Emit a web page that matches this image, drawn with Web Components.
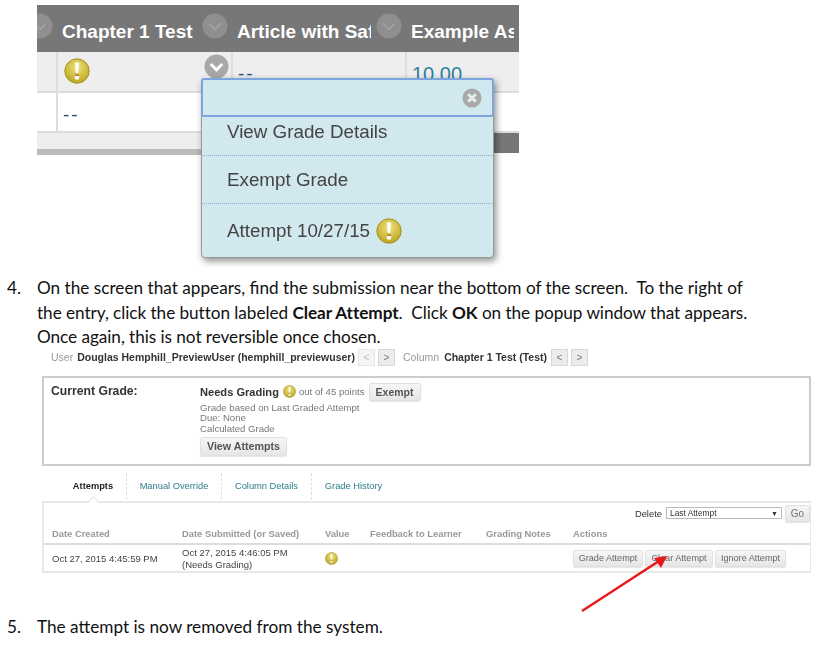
<!DOCTYPE html>
<html>
<head>
<meta charset="utf-8">
<title>Clear Attempt</title>
<style>
  html, body { margin: 0; background: #fff; }
  body { width: 820px; height: 660px; overflow: hidden; position: relative; font-family: "Liberation Sans", Arial, sans-serif; }
  .tight { letter-spacing: -.055px; }
</style>
</head>
<body>
<template id="warn-tpl">
  <style>
    :host { display: inline-block; width: var(--size, 13px); height: var(--size, 13px); vertical-align: middle; }
    svg { display: block; width: 100%; height: 100%; }
  </style>
  <svg viewBox="0 0 26 26">
    <defs>
      <radialGradient id="g" cx="50%" cy="35%" r="70%">
        <stop offset="0" stop-color="#f0e47a"/>
        <stop offset="1" stop-color="#b8a01a"/>
      </radialGradient>
    </defs>
    <circle cx="13" cy="13" r="12.2" fill="url(#g)" stroke="#a39226" stroke-width="1"/>
    <path d="M10.8 4.5h4.4l-1 10.5h-2.4z" fill="#fff"/>
    <circle cx="13" cy="19.5" r="2.3" fill="#fff"/>
    <path d="M11 17.2h4" stroke="#b5562a" stroke-width="1.2"/>
  </svg>
</template>

<script>
  const warnTpl = document.getElementById('warn-tpl');

  class WarnIcon extends HTMLElement {
    constructor() {
      super();
      this.attachShadow({ mode: 'open' }).appendChild(warnTpl.content.cloneNode(true));
    }
  }

  class ChevronDot extends HTMLElement {
    constructor() {
      super();
      this.attachShadow({ mode: 'open' }).innerHTML = `
        <style>
          :host { display: block; width: 26px; height: 26px; }
          svg { display: block; width: 100%; height: 100%; }
        </style>
        <svg viewBox="0 0 26 26">
          <circle cx="13" cy="13" r="12.5" fill="var(--dot, #8f8f8f)"/>
          <path d="M7 10.5l6 6 6-6" fill="none" stroke="var(--mark, #a6a6a6)" stroke-width="var(--mark-w, 1.5)"/>
        </svg>`;
    }
  }

  class GradeGrid extends HTMLElement {
    constructor() {
      super();
      this.attachShadow({ mode: 'open' }).innerHTML = `
        <style>
          :host { display: block; width: 482px; height: 150px; margin: 5px 0 0 37px; filter: blur(.45px); overflow: hidden; }
          .grid { display: grid; grid-template-columns: 19px 175px 174px 114px; grid-template-rows: 47px 41px 40px; }
          .head { background: #777; color: #fff; font-size: 19px; font-weight: bold; white-space: nowrap; overflow: hidden; display: flex; align-items: center; }
          .head span { margin: 7px 5px 0 6px; overflow: hidden; flex: 1; min-width: 0; }
          .head chevron-dot { flex: none; margin: -6px 3px 0 0; }
          .head:first-child chevron-dot { margin-left: -10px; }
          .cell { box-sizing: border-box; border-bottom: 2px solid #ddd; border-left: 2px solid #ddd; font-size: 20px; color: #2a5080; display: flex; align-items: center; position: relative; padding-left: 6px; }
          .first { border-left: 0; }
          .grey { background: #eee; }
          .blue { color: #2d7f9e; padding: 5px 0 0 5px; }
          .dash { padding: 5px 0 0 5px; letter-spacing: 2px; font-size: 19px; }
          .cell chevron-dot { position: absolute; right: 2px; top: 2px; --dot: #a8a8a8; --mark: #fff; --mark-w: 3; width: 25px; height: 25px; }
          .cell warn-icon { --size: 26px; margin-top: -2px; }
          .scroll { display: flex; height: 22px; }
          .track { flex: 1; background: linear-gradient(#eee 0 16px, #bbb 16px); }
          .thumb { width: 25px; height: 20px; background: #777; }
        </style>
        <div class="grid">
          <div class="head"><chevron-dot></chevron-dot></div>
          <div class="head"><span>Chapter 1 Test</span><chevron-dot></chevron-dot></div>
          <div class="head"><span>Article with Saf</span><chevron-dot></chevron-dot></div>
          <div class="head"><span>Example Ass</span></div>
          <div class="cell grey first"></div>
          <div class="cell grey"><warn-icon></warn-icon><chevron-dot></chevron-dot></div>
          <div class="cell grey dash">--</div>
          <div class="cell grey blue">10.00</div>
          <div class="cell first"></div>
          <div class="cell dash">--</div>
          <div class="cell"></div>
          <div class="cell"></div>
        </div>
        <div class="scroll"><div class="track"></div><div class="thumb"></div></div>`;
    }
  }

  class GradeMenu extends HTMLElement {
    constructor() {
      super();
      this.attachShadow({ mode: 'open' }).innerHTML = `
        <style>
          :host { position: absolute; left: 201px; top: 78px; width: 293px; height: 180px; box-sizing: border-box; display: flex; flex-direction: column; background: #d0e8ee; border: 1px solid #9a9a9a; border-radius: 4px; box-shadow: 2px 3px 7px rgba(0,0,0,.45); filter: blur(.35px); color: #444; font-size: 18.8px; }
          .top { height: 39px; flex: none; box-sizing: border-box; border: 2px solid #7ba4e0; border-radius: 3px; margin: -1px -1px 0; display: flex; align-items: center; justify-content: flex-end; padding-right: 10px; }
          .top svg { width: 20px; height: 20px; }
          .item { display: flex; align-items: center; gap: 6px; padding-left: 25px; box-sizing: border-box; white-space: nowrap; }
          .item + .item { border-top: 1px dotted #8fb0d8; }
          .a { height: 38px; padding-bottom: 9px; }
          .b { height: 48px; }
          .c { height: 54px; }
          warn-icon { --size: 26px; }
        </style>
        <div class="top">
          <svg viewBox="0 0 20 20"><circle cx="10" cy="10" r="9.5" fill="#a9a9a9"/><path d="M6.2 6.2l7.6 7.6M13.8 6.2l-7.6 7.6" stroke="#e6eef0" stroke-width="3"/></svg>
        </div>
        <div class="item a">View Grade Details</div>
        <div class="item b">Exempt Grade</div>
        <div class="item c"><span>Attempt 10/27/15</span><warn-icon></warn-icon></div>`;
    }
  }

  class DocStep extends HTMLElement {
    constructor() {
      super();
      this.attachShadow({ mode: 'open' }).innerHTML = `
        <style>
          :host { display: grid; grid-template-columns: 30px 1fr; padding-left: 7px; font-family: Lato, "Noto Sans", sans-serif; font-size: 17.2px; line-height: 24.5px; color: #111; white-space: pre; }
        </style>
        <div><slot name="num"></slot></div>
        <div><slot></slot></div>`;
    }
  }

  class BbButton extends HTMLElement {
    constructor() {
      super();
      this.attachShadow({ mode: 'open' }).innerHTML = `
        <style>
          :host { display: inline-flex; align-items: center; justify-content: center; box-sizing: border-box; height: var(--h, 17px); background: linear-gradient(#f6f6f6, #e6e6e6); border: 1px solid #e0e0e0; border-radius: 2px; box-shadow: 0 1px 1px rgba(0,0,0,.1); color: var(--c, #555); font: var(--w, normal) var(--fs, 10px) "Liberation Sans", Arial, sans-serif; white-space: nowrap; }
        </style>
        <slot></slot>`;
    }
  }

  class PageBar extends HTMLElement {
    constructor() {
      super();
      this.attachShadow({ mode: 'open' }).innerHTML = `
        <style>
          :host { display: flex; align-items: center; height: 17px; margin: 0 0 0 51px; font-size: 10.5px; color: #999; white-space: nowrap; filter: blur(.3px); position: relative; top: -1px; }
          b { color: #333; margin-left: 4px; }
          .pg { box-sizing: border-box; width: 17px; height: 17px; border: 1px solid #e6e6e6; background: #f4f4f4; color: #bbb; display: flex; align-items: center; justify-content: center; font-size: 10px; margin-left: 3px; }
          .pg.on { background: #ececec; border-color: #d8d8d8; color: #777; }
        </style>
        <span>User</span><b>Douglas Hemphill_PreviewUser (hemphill_previewuser)</b>
        <span class="pg" style="margin-left:3px">&lt;</span><span class="pg on">&gt;</span>
        <span style="margin-left:8px">Column</span><b style="margin-left:5px">Chapter 1 Test (Test)</b>
        <span class="pg on" style="margin-left:4px">&lt;</span><span class="pg on">&gt;</span>`;
    }
  }

  class CurrentGrade extends HTMLElement {
    constructor() {
      super();
      this.attachShadow({ mode: 'open' }).innerHTML = `
        <style>
          :host { display: grid; grid-template-columns: 149px 1fr; box-sizing: border-box; width: 769px; height: 90px; margin: 9px 0 0 42px; padding: 5px 7px; border: 2px solid #ccc; font-size: 9.6px; color: #777; filter: blur(.3px); }
          .label { font-size: 12.2px; font-weight: bold; color: #333; margin-top: 1px; }
          .top { display: flex; align-items: center; height: 18px; }
          .top b { font-size: 11.1px; color: #333; }
          warn-icon { margin: 0 3px 0 4px; }
          bb-button { margin-left: 4px; --w: bold; --fs: 10.5px; width: 52px; --h: 18px; }
          .note { line-height: 10.7px; margin-top: 2px; }
          .view { margin: 2px 0 0; width: 87px; --h: 19px; --fs: 10.7px; }
        </style>
        <div class="label">Current Grade:</div>
        <div>
          <div class="top"><b>Needs Grading</b><warn-icon></warn-icon><span>out of 45 points</span><bb-button>Exempt</bb-button></div>
          <div class="note"><div>Grade based on Last Graded Attempt</div><div>Due: None</div><div>Calculated Grade</div></div>
          <bb-button class="view">View Attempts</bb-button>
        </div>`;
    }
  }

  class AttemptTabs extends HTMLElement {
    constructor() {
      super();
      this.attachShadow({ mode: 'open' }).innerHTML = `
        <style>
          :host { display: block; width: 769px; margin: 4px 0 0 42px; font-size: 9.3px; filter: blur(.3px); }
          .tabs { display: flex; height: 31px; }
          .tab { display: flex; align-items: center; justify-content: center; box-sizing: border-box; color: #2f7d8c; border-right: 1px dashed #e0e0e0; height: 27px; margin-top: 3px; white-space: nowrap; }
          .on { color: #222; font-weight: bold; width: 85px; padding-left: 18px; position: relative; }
          .mo { width: 95px; }
          .cd { width: 90px; }
          .gh { width: 83px; border: 0; }
          .notch { position: absolute; left: 47px; bottom: -7px; width: 8px; height: 8px; background: #fff; border-left: 1px solid #e0e0e0; border-top: 1px solid #e0e0e0; transform: rotate(45deg); z-index: 1; }
          .box { position: relative; box-sizing: border-box; height: 72px; border: 2px solid #e8e8e8; border-right-width: 1px; }
          .del { display: flex; align-items: center; justify-content: flex-end; height: 17px; margin-top: 2px; color: #333; font-size: 9.4px; }
          .sel { box-sizing: border-box; width: 116px; height: 12px; border: 1px solid #bbb; margin: 0 3px 0 4px; padding: 0 3px; font-size: 8.4px; display: flex; align-items: center; justify-content: space-between; color: #333; }
          .go { width: 25px; --c: #777; }
          .row { display: grid; grid-template-columns: 130px 143px 45px 116px 87px 1fr; padding-left: 8px; align-items: center; }
          .hd { height: 18px; margin-top: 3px; border-bottom: 2px solid #ddd; color: #999; font-weight: bold; font-size: 9.4px; }
          .bd { height: 28px; color: #444; font-size: 9.5px; line-height: 11.5px; white-space: nowrap; }
          .acts { display: flex; gap: 2px; margin-top: -1px; }
          .acts bb-button { --c: #666; --fs: 9.1px; }
        </style>
        <div class="tabs">
          <div class="tab on">Attempts<i class="notch"></i></div>
          <div class="tab mo">Manual Override</div>
          <div class="tab cd">Column Details</div>
          <div class="tab gh">Grade History</div>
        </div>
        <div class="box">
          <div class="del"><span>Delete</span><div class="sel"><span>Last Attempt</span><span style="font-size:7px">▼</span></div><bb-button class="go">Go</bb-button></div>
          <div class="row hd"><span>Date Created</span><span>Date Submitted (or Saved)</span><span>Value</span><span>Feedback to Learner</span><span>Grading Notes</span><span>Actions</span></div>
          <div class="row bd">
            <span>Oct 27, 2015 4:45:59 PM</span>
            <span><div>Oct 27, 2015 4:46:05 PM</div><div>(Needs Grading)</div></span>
            <span><warn-icon></warn-icon></span><span></span><span></span>
            <span class="acts"><bb-button style="width:70px">Grade Attempt</bb-button><bb-button style="width:68px">Clear Attempt</bb-button><bb-button style="width:71px">Ignore Attempt</bb-button></span>
          </div>
        </div>`;
    }
  }

  class RedArrow extends HTMLElement {
    constructor() {
      super();
      this.attachShadow({ mode: 'open' }).innerHTML = `
        <style>
          :host { position: absolute; left: 575px; top: 550px; width: 100px; height: 66px; }
          svg { display: block; }
        </style>
        <svg width="100" height="66" viewBox="0 0 100 66">
          <path d="M7 61L84 11" stroke="#e81818" stroke-width="2.4"/>
          <path d="M92 6L79 8l7 10z" fill="#e81818"/>
        </svg>`;
    }
  }

  customElements.define('warn-icon', WarnIcon);
  customElements.define('chevron-dot', ChevronDot);
  customElements.define('grade-grid', GradeGrid);
  customElements.define('grade-menu', GradeMenu);
  customElements.define('doc-step', DocStep);
  customElements.define('bb-button', BbButton);
  customElements.define('page-bar', PageBar);
  customElements.define('current-grade', CurrentGrade);
  customElements.define('attempt-tabs', AttemptTabs);
  customElements.define('red-arrow', RedArrow);
</script>

<grade-grid></grade-grid>
<grade-menu></grade-menu>
<doc-step style="margin-top:121px"><span slot="num">4.</span><div>On the screen that appears, find the submission near the bottom of the screen.  To the right of</div><div class="tight"><span>the entry, click the button labeled </span><b>Clear Attempt</b><span>.  Click </span><b>OK</b><span> on the popup window that appears.</span></div><div class="tight">Once again, this is not reversible once chosen.</div></doc-step>
<page-bar></page-bar>
<current-grade></current-grade>
<attempt-tabs></attempt-tabs>
<doc-step style="margin-top:42px"><span slot="num">5.</span><div>The attempt is now removed from the system.</div></doc-step>
<red-arrow></red-arrow>
</body>
</html>
